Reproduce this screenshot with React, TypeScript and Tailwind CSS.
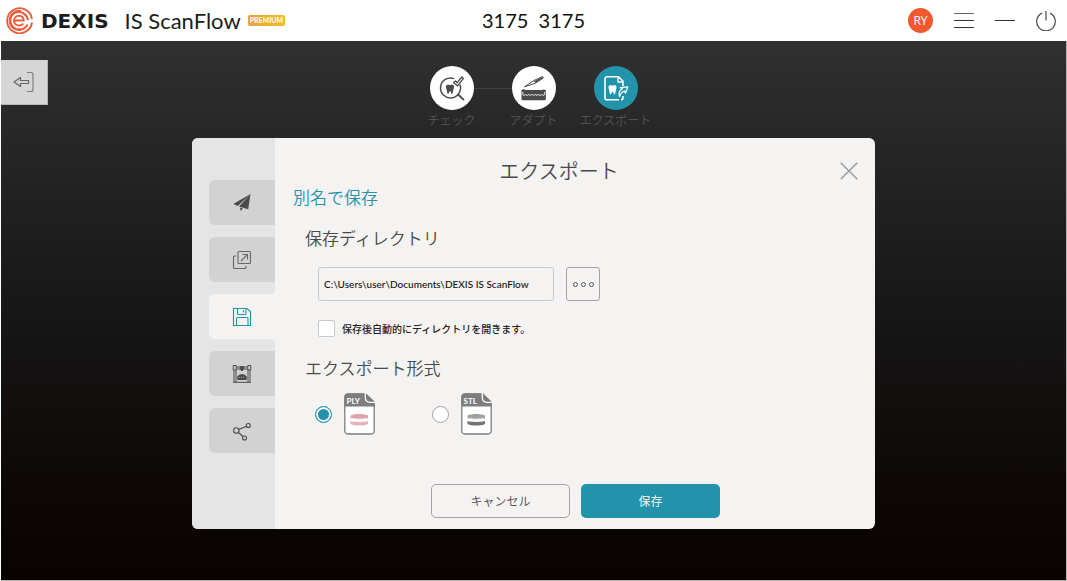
import { useState, type ReactNode } from "react";

const JP = "font-['Lato','Noto_Sans_CJK_JP',sans-serif]";

function BrandMark() {
  return (
    <svg viewBox="0 0 27 27" className="size-[27px] shrink-0" fill="none" stroke="#e8603c" aria-hidden="true">
      <path d="M26 12A12.500 12.500 0 1 0 26 15.500" strokeWidth="1.900" />
      <path d="M15 4.300C9.500 3.300 4 7.500 4 13.500S9.500 23.500 15 22.700" strokeWidth="2.600" />
      <path d="M10 5.200c6-1.200 11.300 2.300 12 8" strokeWidth="2" />
      <path d="M11.500 22.300c4.700.8 8.300-1.300 10-4.800" strokeWidth="2" />
      <path d="M8 13.600h9.700c0-2.900-2-4.900-4.700-4.900-2.900 0-5 2.200-5 4.900s2.100 4.900 5 4.900c1.900 0 3.300-.7 4.200-1.900" strokeWidth="2" />
    </svg>
  );
}

function ToothShape({ x, y, s = 1, fill }: { x: number; y: number; s?: number; fill: string }) {
  return (
    <path
      transform={`translate(${x} ${y}) scale(${s})`}
      fill={fill}
      stroke="none"
      d="M0 2.200C0 .4 1.800-.2 4 .8 6.200-.2 8 .4 8 2.200c0 1.500-.6 2.300-.8 3.600C7 7.500 6.700 9.500 5.900 9.500 5 9.500 5 6.500 4 6.500s-1 3-1.900 3C1.300 9.500 1 7.500.8 5.800.6 4.500 0 3.700 0 2.200z"
    />
  );
}

function CheckStepIcon() {
  return (
    <svg viewBox="0 0 28 28" className="size-7" fill="none" stroke="#4a4a4a" aria-hidden="true">
      <path d="M21.900 10.500A10 10 0 1 1 16 4.600" strokeWidth="1.500" />
      <path d="M20 20.500l5.500 5" strokeWidth="1.800" strokeLinecap="round" />
      <ToothShape x={8} y={10.500} fill="#4a4a4a" />
      <path d="M15.500 8.500l2-1.500 1.700 1.700L23.800 3l1.700 1.400-6 7.400z" strokeWidth="1.300" strokeLinejoin="round" fill="#fff" />
    </svg>
  );
}

function AdaptStepIcon() {
  return (
    <svg viewBox="0 0 28 28" className="size-7" fill="none" aria-hidden="true">
      <path d="M4.500 12.800l9.200-6.200L22.500 2.500l.9 1.500-7.800 5.100z" stroke="#4a4a4a" strokeWidth="1" strokeLinejoin="round" />
      <path d="M13.800 7.200L22.500 3l.6 1-7.700 4.800z" fill="#4a4a4a" />
      <path d="M1.500 16c1.500-1 3-.8 4 0h16c1.500-.8 3-.8 4.300 0v9c0 .8-.5 1.300-1.300 1.300H3c-.900 0-1.500-.5-1.500-1.300z" fill="#4a4a4a" />
      <path d="M2.800 18v2.500c.7 1.200 2.200 1.200 2.800-.2.600 1.500 2.900 1.500 3.400 0 .7 1.300 2.500 1.300 3.100 0 .7 1.300 2.700 1.300 3.400 0 .6 1.300 2.400 1.300 3.100 0 .5 1.500 2.800 1.500 3.400 0 .6 1.400 2 1.400 2.700.2V18" stroke="#fff" strokeWidth=".9" />
    </svg>
  );
}

function ExportStepIcon() {
  return (
    <svg viewBox="0 0 28 28" className="size-7" fill="none" stroke="#fff" strokeWidth="1.600" strokeLinejoin="round" aria-hidden="true">
      <path d="M17 25.800H5a2 2 0 0 1-2-2v-19a2 2 0 0 1 2-2h11.500L21 7.300V12M21 22v1.800a2 2 0 0 1-2 2" />
      <path d="M16 3V8h5" strokeWidth="1.300" />
      <ToothShape x={6.500} y={11} fill="#fff" />
      <path d="M17.500 22.500c-1-3.500.5-6.500 3-7.700l-2.300-1.100 7.600-.9-2.300 6.400-1-2.200c-2.500.8-3.800 2.500-5 5.500z" strokeWidth="1.200" fill="#2392ab" />
    </svg>
  );
}

const steps: { label: string; icon: ReactNode; active?: boolean }[] = [
  { label: "チェック", icon: <CheckStepIcon /> },
  { label: "アダプト", icon: <AdaptStepIcon /> },
  { label: "エクスポート", icon: <ExportStepIcon />, active: true },
];

const tabs: { id: string; label: string; icon: ReactNode }[] = [
  {
    id: "send",
    label: "送信",
    icon: (
      <svg viewBox="0 0 20 20" className="size-5" aria-hidden="true">
        <path d="M18.500 1L1.300 11l4.500 1.900zM18.500 1L7 13.400l9.200 2.800zM8 14.600l2.900.9L8.600 18z" fill="#4a4a4a" />
      </svg>
    ),
  },
  {
    id: "open",
    label: "開く",
    icon: (
      <svg viewBox="0 0 20 20" className="size-5" fill="none" stroke="#666" strokeWidth="1.100" aria-hidden="true">
        <rect x="6" y="1.500" width="12.500" height="12" rx="1" />
        <path d="M4 6H2.500a1 1 0 0 0-1 1v10.500a1 1 0 0 0 1 1H13a1 1 0 0 0 1-1V16M9 11l6.300-6.300M10.500 4.500h5v5" />
      </svg>
    ),
  },
  {
    id: "save",
    label: "別名で保存",
    icon: (
      <svg viewBox="0 0 20 20" className="size-5" fill="none" stroke="#2392ab" strokeWidth="1.100" aria-hidden="true">
        <path d="M1.500 1.500h13.700l3.300 3.300v13.700h-17z" />
        <path d="M5.500 1.500v5a1 1 0 0 0 1 1h6.500a1 1 0 0 0 1-1v-5M11.500 3v2.500M4.500 18.500v-7a1 1 0 0 1 1-1h9.500a1 1 0 0 1 1 1v7" />
      </svg>
    ),
  },
  {
    id: "mill",
    label: "ミリング",
    icon: (
      <svg viewBox="0 0 20 20" className="size-5" fill="none" stroke="#4a4a4a" strokeWidth="1" aria-hidden="true">
        <path d="M1.200 1.500h3v4.500h-3zM15.800 1.500h3v4.500h-3zM4.200 3h4M11.800 3h4M4.200 5h3.800M12 5h3.800M2 6v12M4 6v12M16 6v12M18 6v12M1 18.300h18" />
        <path d="M8.300 2.500h3.400v2.700L10 7l-1.700-1.800z" fill="#4a4a4a" />
        <path d="M5.800 15.500v-3c1.200-2.400 7.200-2.400 8.400 0v3z" fill="#4a4a4a" />
        <path d="M7 13.300h6" stroke="#d2d2d2" strokeWidth=".7" strokeDasharray="1 1" />
      </svg>
    ),
  },
  {
    id: "share",
    label: "共有",
    icon: (
      <svg viewBox="0 0 20 20" className="size-5" fill="none" stroke="#4a4a4a" strokeWidth="1.100" aria-hidden="true">
        <circle cx="4.300" cy="9.500" r="2.700" />
        <circle cx="16.300" cy="4.500" r="2" />
        <circle cx="12.500" cy="17" r="2" />
        <path d="M6.800 8.500l7.600-3.200M6.200 11.500l4.900 4" />
      </svg>
    ),
  },
];

function FileIcon({ label, upper, lower }: { label: string; upper: string; lower: string }) {
  return (
    <svg viewBox="0 0 31 42" className="h-[42px] w-[31px]" fill="none" aria-hidden="true">
      <path d="M4 .8h17.500L30.200 9v29a3 3 0 0 1-3 3H3.800a3 3 0 0 1-3-3V4A3.200 3.200 0 0 1 4 .8z" fill="#fff" stroke="#7d7d7d" strokeWidth="1.300" />
      <path d="M4 .5h18L30.500 9v4.500H.5V4A3.500 3.500 0 0 1 4 .5z" fill="#7d7d7d" />
      <path d="M21.300 0v4.500c0 3 1.700 4.800 4.700 4.800h5" stroke="#fff" strokeWidth="1.300" />
      <text x="2.500" y="10.500" fill="#fff" fontSize="8" fontWeight="700" fontFamily="Lato, sans-serif">{label}</text>
      <path d="M6.500 22.500c4-2 13.500-2 17.500 0v3c-5 1-12.500 1-17.500 0z" fill={upper} />
      <path d="M6.500 28c5 1.200 12.500 1.200 17.500 0v3c-4 2-13.500 2-17.500 0z" fill={lower} />
      <path d="M7.500 25.200c5 1 10.500 1 15.500 0" stroke="#fff" strokeWidth="1" strokeDasharray="1.500 1" />
    </svg>
  );
}

const formats = [
  { id: "ply", label: "PLY", upper: "#dfa3ae", lower: "#e8b3bd" },
  { id: "stl", label: "STL", upper: "#a0a0a0", lower: "#747474" },
];

function Header() {
  return (
    <header className="grid h-[41px] shrink-0 grid-cols-[1fr_auto_1fr] items-center bg-white px-[6px] text-[#1d1d1b]">
      <div className="flex items-center whitespace-nowrap">
        <BrandMark />
        <span className="ml-2 font-['DejaVu_Sans',sans-serif] text-[20px] leading-6 font-bold">DEXIS</span>
        <span className="ml-4 text-[22px] leading-6">IS ScanFlow</span>
        <span className="ml-[7px] rounded-[2px] bg-linear-to-r from-[#e5a33b] to-[#f5bb2c] px-[2px] text-[7px] leading-[11px] font-bold text-white">
          PREMIUM
        </span>
      </div>
      <h1 className="pb-[2px] text-[20px] leading-6 whitespace-pre text-[#111]">{"3175  3175"}</h1>
      <div className="flex items-center justify-end gap-[21px] pr-[5px]">
        <button aria-label="RY" className="flex size-[25px] items-center justify-center rounded-full bg-[#ee5a2e] font-['Open_Sans',sans-serif] text-[12px] leading-4 text-white">
          RY
        </button>
        <button aria-label="メニュー" className="flex w-5 flex-col gap-[6px]">
          <span className="h-px w-full bg-[#6b6262]" />
          <span className="h-px w-full bg-[#333]" />
          <span className="h-px w-full bg-[#333]" />
        </button>
        <button aria-label="最小化" className="flex h-5 w-5 items-center">
          <span className="h-px w-full bg-[#333]" />
        </button>
        <button aria-label="終了">
          <svg viewBox="0 0 20 20" className="size-5" fill="none" stroke="#4a4a4a" strokeWidth="1.200" aria-hidden="true">
            <path d="M10 0v9.500M6 2.100a9.300 9.300 0 1 0 8 0" />
          </svg>
        </button>
      </div>
    </header>
  );
}

function Stepper() {
  return (
    <ol className="flex pt-[25px]">
      {steps.map((s, i) => (
        <li key={s.label} className="w-[82px]">
          <div className="flex items-center">
            <span className={i === 1 ? "h-px flex-1 bg-[#404040]" : "h-px flex-1"} />
            <span
              className={
                s.active
                  ? "flex size-11 items-center justify-center rounded-full bg-[#2392ab]"
                  : "flex size-11 items-center justify-center rounded-full bg-white"
              }
            >
              {s.icon}
            </span>
            <span className={i === 0 ? "h-px flex-1 bg-[#404040]" : "h-px flex-1"} />
          </div>
          <p className="text-center text-[12px] leading-[22px] whitespace-nowrap text-[#505050]">{s.label}</p>
        </li>
      ))}
    </ol>
  );
}

function ExportDialog() {
  const [format, setFormat] = useState("ply");
  const [autoOpen, setAutoOpen] = useState(false);
  const [path, setPath] = useState("C:\\Users\\user\\Documents\\DEXIS IS ScanFlow");

  return (
    <section role="dialog" aria-labelledby="export-title" className="mx-auto mt-[6px] flex w-full max-w-[683px] overflow-hidden rounded-[6px] bg-[#f5f3f2]">
      <nav className="flex w-[83px] shrink-0 flex-col gap-3 bg-[#e6e5e5] pt-[42px] pl-[17px]">
        {tabs.map((t) => {
          const active = t.id === "save";
          return (
            <button
              key={t.id}
              aria-label={t.label}
              aria-current={active ? "page" : undefined}
              className={
                active
                  ? "relative flex h-[45px] items-center justify-center rounded-l-[6px] bg-[#f5f3f2]"
                  : "flex h-[45px] items-center justify-center rounded-l-[6px] bg-[#d2d2d2]"
              }
            >
              {active && (
                <>
                  <span className="absolute right-0 bottom-full size-1 bg-[radial-gradient(circle_at_top_left,#e6e5e5_4px,#f5f3f2_4px)]" />
                  <span className="absolute top-full right-0 size-1 bg-[radial-gradient(circle_at_bottom_left,#e6e5e5_4px,#f5f3f2_4px)]" />
                </>
              )}
              {t.icon}
            </button>
          );
        })}
      </nav>

      <form className="flex min-w-0 flex-1 flex-col pt-[19px] pr-[17px] pb-[11px] pl-[18px] text-[#4a4a4a]" onSubmit={(e) => e.preventDefault()}>
        <div className="flex items-center">
          <h2 id="export-title" className="flex-1 text-center text-[20px] leading-7 font-[350]">エクスポート</h2>
          <button type="button" aria-label="閉じる" className="flex w-[33px] justify-end">
            <svg viewBox="0 0 18 18" className="size-[18px]" stroke="#999" strokeWidth="1.400" aria-hidden="true">
              <path d="M.7 .7l16.600 16.600M17.300 .7L.7 17.300" />
            </svg>
          </button>
        </div>
        <h3 className="text-[17px] leading-[26px] font-[350] text-[#2392ab]">別名で保存</h3>

        <div className="mt-4 pl-3">
          <label htmlFor="save-dir" className="block text-[17px] leading-6 font-[350]">保存ディレクトリ</label>
          <div className="mt-4 flex gap-3 pl-[13px]">
            <input
              id="save-dir"
              value={path}
              onChange={(e) => setPath(e.target.value)}
              className="h-[34px] w-[236px] rounded-[3px] border border-[#c9c9cb] px-[5px] text-[10px] font-medium text-[#111]"
            />
            <button type="button" aria-label="参照" className="flex size-[34px] items-center justify-center gap-[3px] rounded-[3px] border border-[#a5a2a4]">
              <span className="size-[5px] rounded-full border border-[#555]" />
              <span className="size-[5px] rounded-full border border-[#555]" />
              <span className="size-[5px] rounded-full border border-[#555]" />
            </button>
          </div>
          <div className="mt-[19px] flex items-center gap-[7px] pl-[13px]">
            <input
              id="auto-open"
              type="checkbox"
              checked={autoOpen}
              onChange={(e) => setAutoOpen(e.target.checked)}
              className="size-[17px] appearance-none rounded-[2px] border border-[#c9c9cb] bg-white checked:bg-[#2392ab]"
            />
            <label htmlFor="auto-open" className="text-[10px] leading-4 font-medium text-[#222]">
              保存後自動的にディレクトリを開きます。
            </label>
          </div>

          <fieldset className="mt-5">
            <legend className="text-[17px] leading-6 font-[350]">エクスポート形式</legend>
            <div className="mt-3 flex gap-[57px] pl-[10px]">
              {formats.map((f) => (
                <label key={f.id} className="flex items-center gap-3">
                  <input
                    type="radio"
                    name="format"
                    aria-label={f.label}
                    checked={format === f.id}
                    onChange={() => setFormat(f.id)}
                    className="size-[17px] appearance-none rounded-full border border-[#a5a2a4] bg-white checked:border-[#2392ab] checked:bg-[#2392ab] checked:shadow-[inset_0_0_0_2px_white]"
                  />
                  <FileIcon label={f.label} upper={f.upper} lower={f.lower} />
                </label>
              ))}
            </div>
          </fieldset>
        </div>

        <div className="mt-[49px] flex justify-center gap-[11px]">
          <button type="button" className="h-[34px] w-[139px] rounded-[5px] border border-[#a5a2a4] pt-px text-[12px] font-[350]">キャンセル</button>
          <button type="submit" className="h-[34px] w-[139px] rounded-[5px] bg-[#2392ab] pt-px text-[12px] font-[350] text-white">保存</button>
        </div>
      </form>
    </section>
  );
}

export default function App() {
  return (
    <div className={`${JP} flex min-h-screen flex-col bg-white`}>
      <Header />
      <main className="flex-1 border-r border-b border-l border-[#b8b2b2] border-l-white bg-linear-to-b from-[#303030] via-[#171717] to-[#080302]">
        <div className="grid grid-cols-[1fr_auto_1fr] items-start">
          <div className="pt-[19px]">
            <button aria-label="戻る" className="flex h-[45px] w-[47px] items-center justify-center border-r border-b border-[#b5b5b5] bg-[#d6d6d6]">
              <svg viewBox="0 0 22 22" className="size-[22px]" fill="none" stroke="#666" strokeWidth="1.200" aria-hidden="true">
                <path d="M1 11l6.500-4.500V9.500h8v3h-8v3z" strokeLinejoin="round" />
                <path d="M14 1.500h4a2 2 0 0 1 2 2v15a2 2 0 0 1-2 2h-4" stroke="#857d7d" />
              </svg>
            </button>
          </div>
          <Stepper />
        </div>
        <ExportDialog />
      </main>
    </div>
  );
}
